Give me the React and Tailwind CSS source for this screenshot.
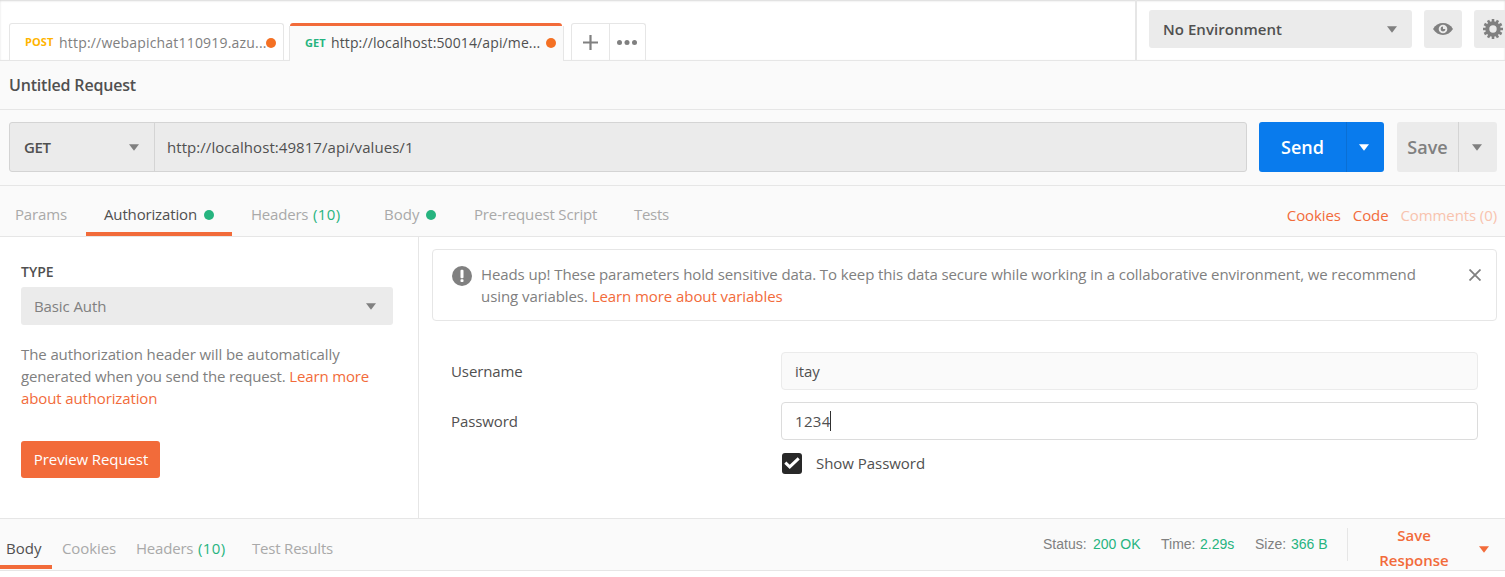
import React from "react";

function Caret({ className = "" }) {
  return (
    <svg className={`block h-[7px] w-[10px] shrink-0 ${className}`} viewBox="0 0 10 7" fill="currentColor">
      <path d="M0 0.3h10L5 6.7z" />
    </svg>
  );
}

function Dot({ className = "" }) {
  return <span className={`block h-[10px] w-[10px] shrink-0 rounded-full ${className}`} />;
}

function Gear() {
  const teeth = [0, 30, 60, 90, 120, 150];
  return (
    <svg className="block h-[20px] w-[20px] shrink-0" viewBox="-10 -10 20 20">
      <g stroke="#808080" strokeWidth="2.6">
        {teeth.map((a) => (
          <path key={a} d="M0 -10V-6M0 6V10" transform={`rotate(${a})`} />
        ))}
      </g>
      <circle r="5.7" fill="none" stroke="#808080" strokeWidth="4" />
    </svg>
  );
}

function Eye() {
  return (
    <svg className="block h-[12px] w-[20px]" viewBox="0 0 20 12">
      <path d="M0 6C2.4 2 6 .1 10 .1S17.600 2 20 6c-2.400 4-6 5.900-10 5.900S2.400 10 0 6z" fill="#808080" />
      <circle cx="10" cy="6" r="4.300" fill="#ebebeb" />
      <path d="M10 3.600A2.400 2.400 0 1 0 12.400 6H10z" fill="#808080" />
    </svg>
  );
}

function TopTabs() {
  return (
    <div className="flex h-[60px] min-w-0 flex-1 items-end pl-[9px]">
      <div className="flex h-[37px] w-[275px] items-center rounded-t-[3px] border border-b-0 border-[#e6e6e6] bg-white pl-[15px]">
        <span className="w-[34px] pt-px text-[11px] font-bold tracking-[0.1px] text-[#ffb400]">POST</span>
        <span className="w-[207px] pt-px text-[14px] tracking-[0.19px] text-[#808080]">http://webapichat110919.azu...</span>
        <Dot className="mt-px bg-[#f47023]" />
      </div>
      <div className="-mb-px ml-[5px] flex h-[38px] w-[275px] flex-col">
        <div className="ml-px h-[3px] w-[272px] rounded-t-[3px] bg-[#f26b3a]" />
        <div className="flex h-[35px] items-center border-x border-[#e6e6e6] bg-[#fafafa] pb-[2px] pl-[15px]">
          <span className="w-[26px] pt-px text-[11px] font-bold text-[#26b47f]">GET</span>
          <span className="w-[215px] text-[14px] tracking-[0.12px] text-[#505050]">http://localhost:50014/api/me...</span>
          <Dot className="bg-[#f47023]" />
        </div>
      </div>
      <div className="ml-[7px] flex h-[37px] w-[75px] rounded-t-[3px] border border-b-0 border-[#e6e6e6] text-[#808080]">
        <div className="flex w-[38px] items-center justify-center border-r border-[#e6e6e6]">
          <svg className="block h-[15px] w-[15px]" viewBox="0 0 15 15" stroke="currentColor" strokeWidth="2.200">
            <path d="M7.500 0v15M0 7.500h15" />
          </svg>
        </div>
        <div className="flex flex-1 items-center justify-center pr-[2px]">
          <svg className="block h-[5px] w-[20px]" viewBox="0 0 20 5" fill="currentColor">
            <circle cx="2.500" cy="2.500" r="2.500" />
            <circle cx="10" cy="2.500" r="2.500" />
            <circle cx="17.500" cy="2.500" r="2.500" />
          </svg>
        </div>
      </div>
    </div>
  );
}

function Environment() {
  return (
    <div className="flex h-[60px] w-[370px] shrink-0 items-start overflow-hidden border-l-2 border-[#e6e6e6] pl-[12px] pt-[10px]">
      <div className="flex h-[38px] w-[263px] shrink-0 items-center justify-between rounded-[3px] bg-[#ebebeb] pl-[14px] pr-[15px] text-[#505050]">
        <span className="text-[15px] font-semibold tracking-[0.04px]">No Environment</span>
        <Caret className="text-[#808080]" />
      </div>
      <div className="ml-[12px] flex h-[38px] w-[38px] shrink-0 items-center justify-center rounded-[3px] bg-[#ebebeb]">
        <Eye />
      </div>
      <div className="ml-[12px] flex h-[38px] w-[38px] shrink-0 items-center justify-center rounded-[3px] bg-[#ebebeb]">
        <Gear />
      </div>
    </div>
  );
}

function UrlBar() {
  return (
    <div className="flex h-[76px] items-center border-b border-[#e6e6e6] pb-px pl-[9px]">
      <div className="flex h-[50px] w-[1238px] rounded-[3px] border border-[#d4d4d4] bg-[#ebebeb] text-[#505050]">
        <div className="flex w-[145px] items-center justify-between border-r border-[#d4d4d4] pl-[14px] pr-[15px]">
          <span className="text-[15px] font-semibold tracking-[-0.35px]">GET</span>
          <Caret className="text-[#808080]" />
        </div>
        <div className="flex items-center pl-[12px] text-[15px] tracking-[0.06px]">http://localhost:49817/api/values/1</div>
      </div>
      <div className="ml-[12px] flex h-[50px] w-[125px] overflow-hidden rounded-[3px] bg-[#097bed] text-white">
        <div className="flex w-[88px] items-center justify-center border-r border-[#0a6fd4] text-[18px] font-semibold">Send</div>
        <div className="flex flex-1 items-center pl-[12px]">
          <Caret />
        </div>
      </div>
      <div className="ml-[13px] flex h-[50px] w-[100px] overflow-hidden rounded-[3px] bg-[#ebebeb] text-[#808080]">
        <div className="flex w-[62px] items-center justify-center border-r border-[#d4d4d4] text-[18px] font-semibold">Save</div>
        <div className="flex flex-1 items-center pl-[13px]">
          <Caret />
        </div>
      </div>
    </div>
  );
}

function RequestTabs() {
  return (
    <div className="flex h-[51px] border-b border-[#e6e6e6] pt-[7px] text-[15px] leading-[43px] text-[#a9a9a9]">
      <div className="w-[86px] pl-[15px] tracking-[-0.15px]">Params</div>
      <div className="flex w-[146px] items-center justify-between border-b-4 border-[#f26b3a] pl-[18px] pr-[18px] text-[#505050]">
        <span className="-mb-1 tracking-[-0.15px]">Authorization</span>
        <Dot className="-mb-1 bg-[#26b47f]" />
      </div>
      <div className="flex w-[152px] pl-[19px]">
        <span className="w-[62px] tracking-[-0.2px]">Headers</span>
        <span className="tracking-[0.4px] text-[#26b47f]">(10)</span>
      </div>
      <div className="flex w-[90px] items-center">
        <span className="w-[42px]">Body</span>
        <Dot className="bg-[#26b47f]" />
      </div>
      <div className="w-[160px] tracking-[-0.15px]">Pre-request Script</div>
      <div className="flex-1 tracking-[-0.3px]">Tests</div>
      <div className="flex gap-[12px] pr-[8px] pt-[1px] tracking-[-0.1px] text-[#f26b3a]">
        <span>Cookies</span>
        <span>Code</span>
        <span className="text-[#f8c3ae]">Comments (0)</span>
      </div>
    </div>
  );
}

function AuthType() {
  return (
    <div className="w-[419px] shrink-0 border-r border-[#e6e6e6] pl-[21px] pt-[24px]">
      <div className="h-[26px] text-[14px] font-semibold leading-[22px] text-[#505050]">TYPE</div>
      <div className="flex h-[38px] w-[372px] items-center justify-between rounded-[3px] bg-[#ebebeb] pl-[13px] pr-[17px] text-[15px] tracking-[-0.1px] text-[#808080]">
        <span>Basic Auth</span>
        <Caret />
      </div>
      <div className="mt-[18px] whitespace-nowrap text-[15px] leading-[22px] tracking-[-0.1px] text-[#808080]">
        The authorization header will be automatically
        <br />
        <span className="tracking-[-0.15px]">
          generated when you send the request. <span className="text-[#f26b3a]">Learn more</span>
        </span>
        <br />
        <span className="tracking-[-0.13px] text-[#f26b3a]">about authorization</span>
      </div>
      <button className="mt-[32px] block h-[37px] w-[139px] rounded-[3px] bg-[#f26b3a] pl-px text-[15px] tracking-[-0.1px] text-white">
        Preview Request
      </button>
    </div>
  );
}

function AuthForm() {
  return (
    <div className="flex-1 pl-[13px] pr-[8px] pt-[12px] text-[15px] tracking-[-0.1px] text-[#505050]">
      <div className="flex h-[72px] rounded-[4px] border border-[#e6e6e6] pl-[19px] pt-[13px] leading-[22px] text-[#808080]">
        <svg className="mt-[3px] block h-[20px] w-[20px] shrink-0" viewBox="0 0 20 20">
          <circle cx="10" cy="10" r="10" fill="#808080" />
          <rect x="8.500" y="3.800" width="3" height="8.400" rx="1" fill="#fff" />
          <rect x="8.500" y="13.300" width="3" height="2.700" rx="0.800" fill="#fff" />
        </svg>
        <div className="ml-[9px] flex-1 whitespace-nowrap">
          Heads up! These parameters hold sensitive data. To keep this data secure while working in a collaborative environment, we recommend
          <br />
          <span className="tracking-[-0.07px]">
            using variables. <span className="text-[#f26b3a]">Learn more about variables</span>
          </span>
        </div>
        <svg className="mr-[15px] mt-[6px] block h-[12px] w-[12px] shrink-0" viewBox="0 0 12 12" stroke="#808080" strokeWidth="1.800">
          <path d="M.5.500l11 11M11.500.500l-11 11" />
        </svg>
      </div>
      <div className="mt-[31px] grid grid-cols-[330px_697px] gap-y-[12px] pl-[19px]">
        <label className="leading-[38px]">Username</label>
        <div className="h-[38px] rounded-[4px] border border-[#ebebeb] bg-[#fafafa] pl-[13px] leading-[36px]">itay</div>
        <label className="leading-[38px]">Password</label>
        <div className="flex h-[38px] items-center rounded-[4px] border border-[#dcdcdc] bg-white pl-[13px]">
          <span className="w-[35px] tracking-[0.3px]">1234</span>
          <span className="h-[20px] w-px bg-[#303030]" />
        </div>
      </div>
      <div className="mt-[12px] flex h-[22px] items-center pl-[350px]">
        <span className="flex h-[21px] w-[20px] items-center justify-center rounded-[3px] bg-[#282828]">
          <svg className="block h-[12px] w-[16px]" viewBox="0 0 16 12" fill="none" stroke="#fff" strokeWidth="3">
            <path d="M1.300 5.700l4.400 4.200 9-8.600" />
          </svg>
        </span>
        <span className="ml-[14px] tracking-[-0.04px]">Show Password</span>
      </div>
    </div>
  );
}

function ResponseBar() {
  return (
    <div className="flex h-[53px] border-y border-[#e6e6e6] bg-[#fafafa] text-[15px] text-[#a9a9a9]">
      <div className="flex flex-1 leading-[59px]">
        <div className="h-[50px] w-[52px] border-b-4 border-[#f26b3a] pl-[6px] text-[#505050]">Body</div>
        <div className="w-[84px] pl-[10px] tracking-[-0.1px]">Cookies</div>
        <div className="flex w-[116px]">
          <span className="w-[62px] tracking-[-0.2px]">Headers</span>
          <span className="tracking-[0.4px] text-[#26b47f]">(10)</span>
        </div>
        <div className="tracking-[-0.2px]">Test Results</div>
      </div>
      <div className="flex font-['Liberation_Sans',sans-serif] text-[14px] leading-[50px] text-[#808080]">
        <span className="w-[50px]">Status:</span>
        <span className="w-[68px] text-[#26b47f]">200 OK</span>
        <span className="w-[39px]">Time:</span>
        <span className="w-[55px] text-[#26b47f]">2.29s</span>
        <span className="w-[36px]">Size:</span>
        <span className="w-[56px] text-[#26b47f]">366 B</span>
      </div>
      <div className="mt-[9px] h-[33px] w-px bg-[#e6e6e6]" />
      <div className="ml-[22px] w-[88px] pt-[4px] text-center text-[15px] font-semibold leading-[25px] text-[#f26b3a]">
        Save
        <br />
        Response
      </div>
      <Caret className="ml-[21px] mr-[16px] mt-[27px] text-[#f26b3a]" />
    </div>
  );
}

export default function App() {
  return (
    <div className="flex h-[577px] w-[1505px] flex-col overflow-hidden whitespace-nowrap bg-white font-['Open_Sans',sans-serif]">
      <header className="flex h-[61px] border-b border-[#e6e6e6] shadow-[inset_0_1px_2px_#d8d8d8]">
        <TopTabs />
        <Environment />
      </header>
      <div className="bg-[#fafafa]">
        <div className="h-[49px] border-b border-[#e6e6e6] pl-[9px] text-[16px] font-semibold leading-[48px] tracking-[-0.18px] text-[#505050]">
          Untitled Request
        </div>
        <UrlBar />
        <RequestTabs />
      </div>
      <main className="flex h-[281px]">
        <AuthType />
        <AuthForm />
      </main>
      <ResponseBar />
    </div>
  );
}
